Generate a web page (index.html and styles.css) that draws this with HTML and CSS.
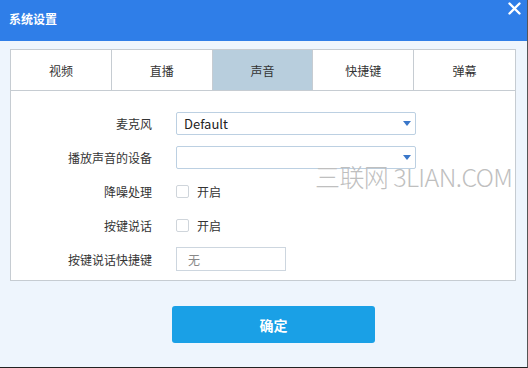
FILE: index.html
```html
<!DOCTYPE html>
<html lang="zh-CN">
  <head>
    <meta charset="UTF-8" />
    <title>系统设置</title>
    <link rel="stylesheet" href="styles.css">
  </head>

  <body>
    <div class="window">
      <div class="titlebar">
        <span class="title">系统设置</span>
        <svg class="close" width="13" height="13" viewBox="0 0 13 13">
          <path d="M1.5 1.5 L11.5 11.5 M11.5 1.5 L1.5 11.5" stroke="#fff" stroke-width="2.4" stroke-linecap="round" />
        </svg>
      </div>

      <div class="content">
        <div class="panel">
          <div class="tabs">
            <div class="tab">视频</div>
            <div class="tab">直播</div>
            <div class="tab active">声音</div>
            <div class="tab">快捷键</div>
            <div class="tab">弹幕</div>
          </div>

          <div class="form">
            <div class="label">麦克风</div>
            <div class="field">
              <div class="select">
                <span>Default</span>
                <span class="arrow"></span>
              </div>
            </div>

            <div class="label">播放声音的设备</div>
            <div class="field">
              <div class="select">
                <span></span>
                <span class="arrow"></span>
              </div>
            </div>

            <div class="label">降噪处理</div>
            <div class="field">
              <label class="check"><span class="box"></span>开启</label>
            </div>

            <div class="label">按键说话</div>
            <div class="field">
              <label class="check"><span class="box"></span>开启</label>
            </div>

            <div class="label">按键说话快捷键</div>
            <div class="field">
              <div class="hotkey">无</div>
            </div>
          </div>
        </div>

        <button class="ok-button">确定</button>
      </div>

      <div class="watermark">三联网 3LIAN.COM</div>
    </div>
  </body>
</html>
```

FILE: styles.css
```css
* {
  margin: 0;
  padding: 0;
  box-sizing: border-box;
  font-family: "Noto Sans CJK SC", "Noto Sans", sans-serif;
}

body {
  width: 528px;
  height: 368px;
  overflow: hidden;
  background: #eef5fd;
}

.window {
  position: relative;
  width: 528px;
  height: 368px;
  border-bottom: 1px solid #222;
  border-right: 1px solid #555;
  color: #333;
}

.titlebar {
  height: 41px;
  background: #2f7ee8;
  display: flex;
  align-items: center;
  justify-content: space-between;
  padding: 0 6px 0 9px;
}

.title {
  color: #fff;
  font-size: 12px;
  font-weight: 700;
  margin-top: -4px;
}

.close {
  margin-top: -24px;
}

.content {
  padding: 8px 11px 0 10px;
}

.panel {
  background: #fff;
  border: 1px solid #c6ccd2;
  height: 232px;
}

.tabs {
  display: grid;
  grid-template-columns: repeat(5, 1fr);
  height: 41px;
  border-bottom: 1px solid #c6ccd2;
}

.tab {
  display: flex;
  align-items: center;
  justify-content: center;
  font-size: 12px;
  color: #333;
  border-right: 1px solid #c6ccd2;
}

.tab:last-child {
  border-right: none;
}

.tab.active {
  background: #b8cedd;
}

.form {
  display: grid;
  grid-template-columns: 141px 1fr;
  grid-auto-rows: 34px;
  column-gap: 24px;
  padding-top: 15px;
}

.label {
  font-size: 12px;
  color: #333;
  text-align: right;
  display: flex;
  align-items: center;
  justify-content: flex-end;
}

.field {
  display: flex;
  align-items: center;
}

.select {
  width: 240px;
  height: 23px;
  border: 1px solid #bcd0e2;
  border-radius: 2px;
  background: #fff;
  display: flex;
  align-items: center;
  justify-content: space-between;
  padding: 0 4px 0 7px;
  font-size: 13px;
  color: #222;
}

.arrow {
  width: 0;
  height: 0;
  border-left: 4px solid transparent;
  border-right: 4px solid transparent;
  border-top: 5px solid #3a77c9;
  margin-top: 1px;
}

.check {
  display: flex;
  align-items: center;
  font-size: 12px;
  color: #333;
}

.box {
  width: 13px;
  height: 13px;
  border: 1px solid #cfd5db;
  border-radius: 2px;
  background: #fff;
  margin-right: 8px;
}

.hotkey {
  width: 110px;
  height: 24px;
  border: 1px solid #cdd6df;
  background: #fff;
  font-size: 12px;
  color: #888;
  display: flex;
  align-items: center;
  padding-left: 11px;
}

.ok-button {
  display: block;
  margin: 25px 0 0 162px;
  width: 203px;
  height: 37px;
  border: none;
  border-radius: 3px;
  background: #1aa0e6;
  color: #fff;
  font-size: 14px;
  font-weight: 700;
}

.watermark {
  position: absolute;
  left: 315px;
  top: 158px;
  font-size: 25px;
  font-weight: 300;
  color: #bfbfbf;
  white-space: nowrap;
  letter-spacing: -0.6px;
}
```
